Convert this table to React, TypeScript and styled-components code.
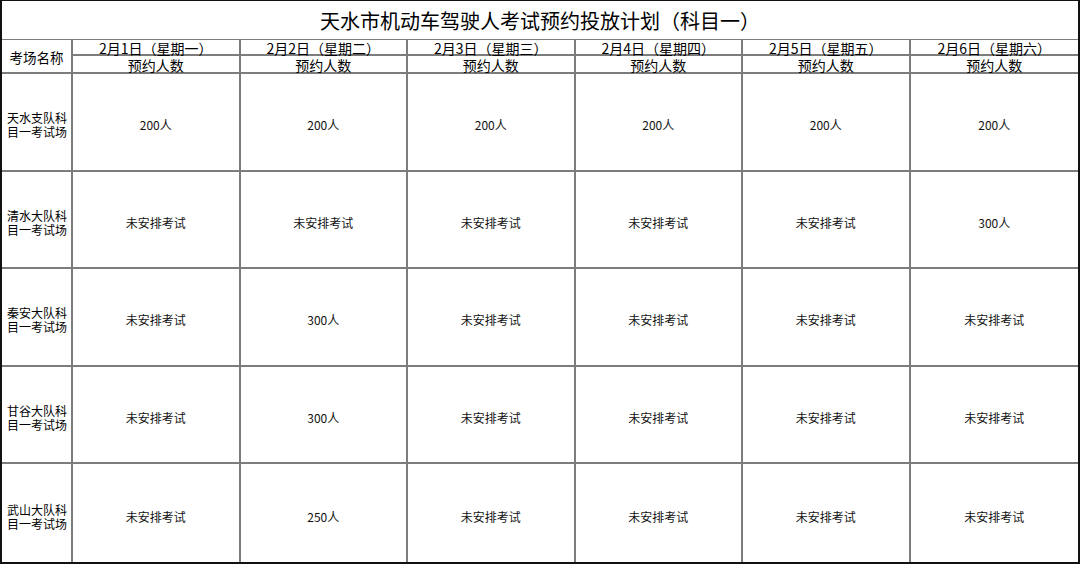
import React from 'react';
import styled, { createGlobalStyle } from 'styled-components';

const GlobalStyle = createGlobalStyle`
  html, body {
    margin: 0;
    padding: 0;
    background: #ffffff;
  }
  body {
    font-family: "Noto Sans CJK SC", "Liberation Sans", sans-serif;
    color: #000;
  }
`;

const LINE = '2px solid #7c7c7c';

const Sheet = styled.div`
  box-sizing: border-box;
  width: 1080px;
  height: 564px;
  display: grid;
  grid-template-columns: 71px repeat(6, 1fr);
  grid-template-rows: 39px 16px 18px repeat(5, 1fr);
  border-top: 1px solid #111;
  border-left: 2px solid #111;
  border-right: 2px solid #111;
  border-bottom: 2px solid #111;
  background: #fff;
`;

const Cell = styled.div<{ $lastCol?: boolean; $lastRow?: boolean; $left?: boolean }>`
  box-sizing: border-box;
  display: flex;
  align-items: center;
  justify-content: ${(p) => (p.$left ? 'flex-start' : 'center')};
  border-right: ${(p) => (p.$lastCol ? 'none' : LINE)};
  border-bottom: ${(p) => (p.$lastRow ? 'none' : LINE)};
  white-space: nowrap;
`;

const TitleCell = styled(Cell)`
  grid-column: 1 / -1;
  font-size: 20px;
  line-height: 24px;
  letter-spacing: 0;
  padding-top: 1px;
  border-bottom-width: 1px;
`;

const CornerCell = styled(Cell)`
  grid-row: 2 / 4;
  font-size: 13.5px;
  padding-top: 1px;
`;

const HeadCell = styled(Cell)`
  font-size: 14px;
  line-height: 14px;
  padding-top: 1px;
`;

const NameCell = styled(Cell)`
  font-size: 12px;
  line-height: 14px;
  padding: 7px 0 0 5px;
  white-space: normal;
  word-break: break-all;
`;

const ValueCell = styled(Cell)`
  font-size: 12px;
  line-height: 14px;
  color: #111;
  padding-top: 7px;
`;

const days = ['2月1日（星期一）', '2月2日（星期二）', '2月3日（星期三）', '2月4日（星期四）', '2月5日（星期五）', '2月6日（星期六）'];

const NO = '未安排考试';

const rows: { name: string; values: string[] }[] = [
  { name: '天水支队科目一考试场', values: ['200人', '200人', '200人', '200人', '200人', '200人'] },
  { name: '清水大队科目一考试场', values: [NO, NO, NO, NO, NO, '300人'] },
  { name: '秦安大队科目一考试场', values: [NO, '300人', NO, NO, NO, NO] },
  { name: '甘谷大队科目一考试场', values: [NO, '300人', NO, NO, NO, NO] },
  { name: '武山大队科目一考试场', values: [NO, '250人', NO, NO, NO, NO] },
];

const App: React.FC = () => {
  return (
    <>
      <GlobalStyle />
      <Sheet>
        <TitleCell $lastCol>天水市机动车驾驶人考试预约投放计划（科目一）</TitleCell>

        <CornerCell>考场名称</CornerCell>
        {days.map((d, i) => (
          <HeadCell key={d} $lastCol={i === days.length - 1}>
            {d}
          </HeadCell>
        ))}
        {days.map((d, i) => (
          <HeadCell key={d + '-n'} $lastCol={i === days.length - 1}>
            预约人数
          </HeadCell>
        ))}

        {rows.map((r, ri) => {
          const lastRow = ri === rows.length - 1;
          return (
            <React.Fragment key={r.name}>
              <NameCell $left $lastRow={lastRow}>
                <span>
                  {r.name.slice(0, 5)}
                  <br />
                  {r.name.slice(5)}
                </span>
              </NameCell>
              {r.values.map((v, vi) => (
                <ValueCell key={vi} $lastRow={lastRow} $lastCol={vi === r.values.length - 1}>
                  {v}
                </ValueCell>
              ))}
            </React.Fragment>
          );
        })}
      </Sheet>
    </>
  );
};

export default App;
